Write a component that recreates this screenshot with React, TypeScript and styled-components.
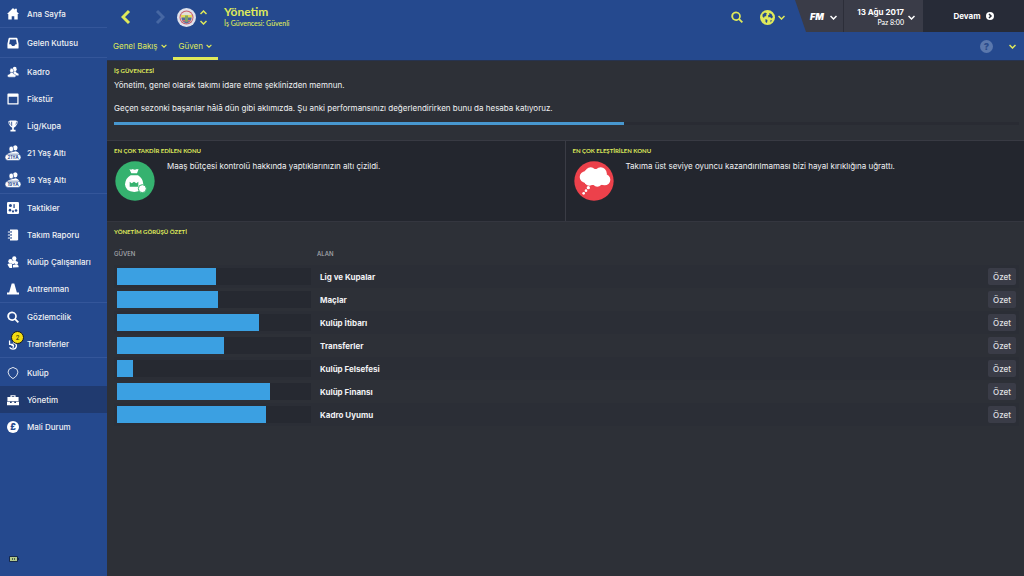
import React from "react";
import styled, { createGlobalStyle } from "styled-components";

const GlobalStyle = createGlobalStyle`
  * { box-sizing: border-box; }
  body {
    margin: 0;
    background: #2d3037;
    color: #f1f2f4;
    font-family: Inter, "Noto Sans", sans-serif;
    font-size: 8px;
    line-height: 12px;
    font-weight: 500;
  }
  button { font: inherit; color: inherit; background: none; border: 0; padding: 0; cursor: pointer; }
  h1, h2, p { margin: 0; }
  p { font-weight: 400; }
  a { color: inherit; text-decoration: none; }
  svg { display: block; flex: none; }
`;

const lime = "#dfe95a";
const narrow = `Lato, "Noto Sans", sans-serif`;

const Shell = styled.div`
  display: grid;
  grid-template-columns: 107px minmax(0, 1fr);
  min-height: 100vh;
`;

/* ---------- sidebar ---------- */

const Sidebar = styled.nav`
  display: flex;
  flex-direction: column;
  background: #25498e;
`;

const NavGroup = styled.div<{ $spaced?: boolean }>`
  padding: ${(p) => (p.$spaced ? "1px 0" : "0")};
  & + & { border-top: 1px solid #34569a; }
`;

const NavLink = styled.a<{ $active?: boolean }>`
  display: flex;
  align-items: center;
  gap: 6px;
  height: 27px;
  padding-left: 5px;
  white-space: nowrap;
  background: ${(p) => (p.$active ? "#203a6f" : "transparent")};
`;

const NavIcon = styled.span`
  position: relative;
  display: grid;
  place-items: center;
  width: 16px;
  height: 16px;
  color: #fff;
`;

const Badge = styled.span`
  position: absolute;
  top: -5px;
  right: -3px;
  width: 13px;
  height: 13px;
  border: 1px solid #14181f;
  border-radius: 50%;
  background: #f2dc12;
  color: #2b2c12;
  font-size: 6px;
  line-height: 11px;
  text-align: center;
`;

const Battery = styled.div`
  margin-top: auto;
  padding: 0 0 14px 9px;
`;

/* ---------- header ---------- */

const Header = styled.header`
  display: flex;
  flex-direction: column;
  height: 60px;
  background: #25498e;
  color: ${lime};
`;

const TopBar = styled.div`
  display: flex;
  height: 32px;
`;

const History = styled.div`
  display: flex;
  align-items: center;
  gap: 24px;
  padding: 2px 0 0 14px;
`;

const Club = styled.div`
  display: flex;
  align-items: center;
  gap: 4px;
  padding: 2px 0 0 12px;
`;

const Stepper = styled.div`
  display: flex;
  flex-direction: column;
  gap: 5px;
`;

const IconButton = styled.button`
  display: flex;
  align-items: center;
  gap: 3px;
`;

const Titles = styled.div`
  padding: 5px 0 0 17px;
`;

const Title = styled.h1`
  font-size: 12px;
  line-height: 14px;
  font-weight: 700;
  font-family: ${narrow};
`;

const Subtitle = styled.p`
  font-size: 7px;
  line-height: 8px;
  font-weight: 500;
  font-family: ${narrow};
`;

const Tools = styled.div`
  display: flex;
  align-items: center;
  gap: 17px;
  margin-left: auto;
  padding: 2px 10px 0 0;
`;

const Clock = styled.div`
  display: flex;
  height: 32px;
  color: #fff;
  background: #3a3c48;
  clip-path: polygon(0 0, 100% 0, 100% 100%, 11px 100%);
`;

const FmButton = styled.button`
  display: flex;
  align-items: center;
  gap: 6px;
  width: 48px;
  padding: 2px 0 0 15px;
`;

const FmMark = styled.span`
  font-size: 9px;
  font-style: italic;
  font-weight: 900;
`;

const DateButton = styled.button`
  display: flex;
  align-items: center;
  justify-content: flex-end;
  gap: 4px;
  width: 80px;
  padding: 2px 8px 0 0;
  border-left: 1px solid #2c2e39;
  text-align: right;
`;

const DateText = styled.span`
  display: flex;
  flex-direction: column;
  line-height: 11px;
  font-weight: 700;
`;

const TimeText = styled.small`
  font-family: ${narrow};
  font-size: 7px;
  line-height: 9px;
  font-weight: 500;
`;

const ContinueButton = styled.button`
  display: flex;
  align-items: center;
  justify-content: center;
  gap: 5px;
  width: 101px;
  background: #272b37;
  font-weight: 700;
`;

const Tabs = styled.div`
  display: flex;
  align-items: stretch;
  flex: 1;
`;

const Tab = styled.button<{ $active?: boolean }>`
  display: flex;
  align-items: center;
  gap: 3px;
  padding: 3px 6px 0;
  border-bottom: 3px solid ${(p) => (p.$active ? lime : "transparent")};
  font-weight: 400;
`;

const TabTools = styled.div`
  display: flex;
  align-items: center;
  gap: 16px;
  margin-left: auto;
  padding: 1px 8px 0 0;
`;

const Help = styled.button`
  width: 13px;
  height: 13px;
  border-radius: 50%;
  background: #5b78ad;
  color: #2b4c8c;
  font-size: 9px;
  line-height: 13px;
  font-weight: 900;
`;

/* ---------- content ---------- */

const Section = styled.section`
  padding: 6px 5px 0 7px;
`;

const Security = styled(Section)`
  height: 80px;
  border-top: 1px solid #263350;
`;

const Heading = styled.h2`
  color: ${lime};
  font-family: ${narrow};
  font-size: 6px;
  line-height: 8px;
  font-weight: 700;
`;

const Copy = styled.p`
  padding-top: 4px;
  & + & { padding-top: 11px; }
`;

const Meter = styled.div`
  height: 3px;
  margin-top: 8px;
  background: #292b33;
`;

const MeterFill = styled.div`
  height: 100%;
  background: #4797cf;
`;

const Topics = styled.div`
  display: grid;
  grid-template-columns: 1fr 1fr;
  border-top: 1px solid #383a43;
  border-bottom: 1px solid #34363f;
  background: #23262e;
`;

const Topic = styled(Section)`
  min-height: 80px;
  &:first-child { border-right: 1px solid #3a3c45; }
`;

const TopicBody = styled.div`
  display: flex;
  gap: 12px;
  padding: 5px 0 0 1px;
  svg { margin-top: 1px; }
`;

const Table = styled.table`
  width: 100%;
  margin-top: 14px;
  border-collapse: collapse;
  table-layout: fixed;
`;

const Th = styled.th<{ $width?: string }>`
  width: ${(p) => p.$width ?? "auto"};
  padding: 0 0 7px;
  color: #a9abb0;
  font-size: 6px;
  line-height: 8px;
  font-weight: 500;
  text-align: left;
`;

const Row = styled.tr`
  height: 23px;
  &:nth-child(odd) { background: #2b2e36; }
`;

const Cell = styled.td`
  padding: 3px;
  &:first-child { padding-right: 6px; }
`;

const NameCell = styled.th`
  padding: 3px;
  font-weight: 700;
  text-align: left;
`;

const Track = styled.div`
  height: 17px;
  background: #262931;
`;

const Fill = styled.div`
  height: 100%;
  background: #3ba0e2;
`;

const SummaryButton = styled.button`
  display: block;
  width: 28px;
  height: 17px;
  border-radius: 2px;
  background: #3a3c47;
  color: #e0e1e5;
`;

/* ---------- icons ---------- */

const Ico = ({ children, size = 14 }: { children: React.ReactNode; size?: number }) => (
  <svg width={size} height={size} viewBox="0 0 28 28" fill="currentColor" aria-hidden="true">
    {children}
  </svg>
);

const Chevron = ({ up = false, size = 7 }: { up?: boolean; size?: number }) => (
  <svg width={size} height={size === 7 ? 5 : 4} viewBox="0 0 14 10" fill="none" stroke="currentColor" strokeWidth="3" aria-hidden="true">
    <path d={up ? "M1 8l6-6 6 6" : "M1 2l6 6 6-6"} />
  </svg>
);

const BackIcon = () => (
  <svg width="10" height="16" viewBox="0 0 10 16" fill="none" stroke="currentColor" strokeWidth="3" aria-hidden="true">
    <path d="M8 2L2 8l6 6" />
  </svg>
);

const ForwardIcon = () => (
  <svg width="10" height="16" viewBox="0 0 10 16" fill="none" stroke="#4667a3" strokeWidth="3" aria-hidden="true">
    <path d="M2 2l6 6-6 6" />
  </svg>
);

const people = (
  <>
    <ellipse cx="18" cy="7.500" rx="4.500" ry="5.500" />
    <path d="M15 13h6l1 3 5 2v4H15z" />
    <ellipse cx="11" cy="11" rx="4.500" ry="5.500" stroke="#25498e" strokeWidth="1" />
    <path d="M8 15h6l1 3 6 3q1 4-3 5H4q-4-1-3-5l6-3z" stroke="#25498e" strokeWidth="1" />
  </>
);

const youth = (label: string) => (
  <>
    <ellipse cx="18" cy="5" rx="4" ry="4.500" />
    <ellipse cx="11" cy="7" rx="4" ry="5" stroke="#25498e" strokeWidth="1" />
    <path d="M3 18q1-4 7-5l9-2q6 2 6 7z" />
    <rect x="0" y="16" width="28" height="11" rx="5.500" stroke="#25498e" strokeWidth="1" />
    <text x="14" y="24.500" fontSize="8" fontWeight="700" textAnchor="middle" fill="#25498e">{label}</text>
  </>
);

const icons: Record<string, React.ReactNode> = {
  home: <path d="M14 0l4 4V2h5v7l5 5h-3v13h-8v-8h-6v8H3V14H0z" />,
  inbox: <path fillRule="evenodd" d="M6 2h16q2 0 2.500 2L27 16v9q0 2-2 2H3q-2 0-2-2v-9L3.500 4Q4 2 6 2zM7 6L5 17h4l3 4h5l3-4h3L21 6z" />,
  squad: people,
  calendar: <path fillRule="evenodd" d="M3 1h22q2 0 2 2v22q0 2-2 2H3q-2 0-2-2V3q0-2 2-2zm1 8v15h20V9z" />,
  cup: <path fillRule="evenodd" d="M6 1h16v2h3q0 9-5 12l-4 3v5h4v4H8v-4h4v-5l-4-3Q3 12 3 3h3zM5 5q0 4 3 7L7 5zm18 0h-2l-1 7q3-3 3-7zM10 4v9l2 2V4z" />,
  u21: youth("21YA"),
  u19: youth("19YA"),
  tactics: (
    <>
      <rect x="0" y="0" width="28" height="28" rx="3" />
      <g fill="#25498e">
        <circle cx="8" cy="8" r="3.500" /><circle cx="7" cy="19" r="3" /><circle cx="14" cy="22" r="2.500" /><circle cx="21" cy="20" r="3" /><rect x="15" y="5" width="3" height="9" />
      </g>
    </>
  ),
  report: (
    <>
      <path d="M7 1h16q3 0 3 3v20q0 3-3 3H7V1z" />
      <path d="M3 7h6M3 14h6M3 21h6" stroke="#25498e" strokeWidth="5" strokeLinecap="round" />
      <path d="M3 7h6M3 14h6M3 21h6" stroke="#fff" strokeWidth="2.500" strokeLinecap="round" />
    </>
  ),
  staff: (
    <>
      <ellipse cx="17" cy="6" rx="5" ry="5.500" />
      <path d="M12 11l9-1 1 5-8 4-5-2z" />
      <ellipse cx="8" cy="12" rx="5" ry="5" />
      <path d="M1 20q2-3 8-3l3 2v9H6z" />
      <ellipse cx="22" cy="16" rx="4" ry="4" />
      <path d="M14 27v-6l7-2q7 1 6 7z" />
    </>
  ),
  cone: <path d="M11 1h6l6 21h5v5H0v-5h5z" />,
  search: <path fillRule="evenodd" d="M12 1a11 11 0 0 1 9 17l7 7-3 3-7-7A11 11 0 1 1 12 1zm0 4a7 7 0 1 0 0 14 7 7 0 0 0 0-14z" />,
  transfer: (
    <g fill="none" stroke="currentColor" strokeWidth="3">
      <path d="M6 6v9h9M14 11q8 1 8 8-1 7-8 7-5 0-8-4" />
      <path d="M10 16l5 2-1 5" />
    </g>
  ),
  club: <path d="M14 1l9 4q5 7 0 14-3 5-9 8-6-3-9-8Q0 12 5 5z" fill="none" stroke="currentColor" strokeWidth="2" />,
  board: (
    <>
      <path fillRule="evenodd" d="M8 7V3h12v4h7v10H1V7zm3 0h6V5h-6z" />
      <path d="M0 18h7v3h4v-3h6v3h4v-3h7v8H0z" />
    </>
  ),
  finance: (
    <>
      <circle cx="14" cy="14" r="14" />
      <text x="14" y="21" fontSize="20" fontWeight="900" textAnchor="middle" fill="#25498e">£</text>
    </>
  ),
};

const Crest = () => (
  <svg width="19" height="19" viewBox="0 0 38 38" role="img" aria-label="Kulüp arması">
    <circle cx="19" cy="19" r="19" fill="#dfe2ec" />
    <circle cx="19" cy="19" r="14" fill="#c9606e" />
    <circle cx="19" cy="19" r="12" fill="#e3dfd6" />
    <path d="M9 14h20v8q-2 7-10 9Q11 29 9 22z" fill="#5468a0" />
    <path d="M8 14h22v5H8z" fill="#e6d85a" />
    <path d="M11 24h16v3H11z" fill="#d6706c" />
    <path d="M16 15h6v11l-3 3-3-3z" fill="#7fa560" />
  </svg>
);

const Globe = () => (
  <svg width="15" height="15" viewBox="0 0 30 30" aria-hidden="true">
    <circle cx="15" cy="15" r="15" fill={lime} />
    <path d="M5 9l5-4 4 2-2 3 1 2-4 1-1 3-3-3zM18 6l5 2 3 6-3 3-3-3-3 1-1-4 3-2zM11 18l4 2-1 6-3-2zM21 20l3 1-3 4z" fill="#25498e" />
  </svg>
);

const MoneyBag = () => (
  <svg width="40" height="40" viewBox="0 0 120 120" aria-hidden="true">
    <circle cx="60" cy="60" r="59" fill="#35b26f" />
    <path d="M43 24q6 3 10 0 6 4 13 0 4 2 5 0l-5 13H49z" fill="#fff" />
    <path d="M47 43h22q15 9 16 27 0 22-27 23-27-1-28-23 1-18 17-27z" fill="#fff" />
    <path d="M44 62l6 5 7-5 7 5 6-5v15H44z" fill="#35b26f" />
    <circle cx="82" cy="83" r="12" fill="#fff" stroke="#35b26f" strokeWidth="3" />
  </svg>
);

const Thought = () => (
  <svg width="40" height="40" viewBox="0 0 120 120" aria-hidden="true">
    <circle cx="60" cy="60" r="59" fill="#ec414b" />
    <g fill="#fff">
      <rect x="28" y="24" width="70" height="48" rx="18" />
      <circle cx="34" cy="48" r="17" /><circle cx="50" cy="36" r="17" /><circle cx="80" cy="37" r="18" />
      <circle cx="92" cy="56" r="17" /><circle cx="70" cy="61" r="16" /><circle cx="46" cy="58" r="16" />
      <circle cx="43" cy="80" r="5" /><circle cx="36" cy="89" r="4" /><circle cx="29" cy="97" r="4" />
    </g>
  </svg>
);

/* ---------- data ---------- */

type Item = { icon: string; label: string; badge?: number; active?: boolean };

const groups: { spaced?: boolean; items: Item[] }[] = [
  { items: [{ icon: "home", label: "Ana Sayfa" }] },
  { spaced: true, items: [{ icon: "inbox", label: "Gelen Kutusu" }] },
  {
    items: [
      { icon: "squad", label: "Kadro" },
      { icon: "calendar", label: "Fikstür" },
      { icon: "cup", label: "Lig/Kupa" },
      { icon: "u21", label: "21 Yaş Altı" },
      { icon: "u19", label: "19 Yaş Altı" },
    ],
  },
  {
    items: [
      { icon: "tactics", label: "Taktikler" },
      { icon: "report", label: "Takım Raporu" },
      { icon: "staff", label: "Kulüp Çalışanları" },
      { icon: "cone", label: "Antrenman" },
    ],
  },
  {
    items: [
      { icon: "search", label: "Gözlemcilik" },
      { icon: "transfer", label: "Transferler", badge: 2 },
    ],
  },
  {
    spaced: true,
    items: [
      { icon: "club", label: "Kulüp" },
      { icon: "board", label: "Yönetim", active: true },
      { icon: "finance", label: "Mali Durum" },
    ],
  },
];

const areas = [
  { name: "Lig ve Kupalar", value: 51 },
  { name: "Maçlar", value: 52 },
  { name: "Kulüp İtibarı", value: 73 },
  { name: "Transferler", value: 55 },
  { name: "Kulüp Felsefesi", value: 8 },
  { name: "Kulüp Finansı", value: 79 },
  { name: "Kadro Uyumu", value: 77 },
];

export default function App() {
  return (
    <>
      <GlobalStyle />
      <Shell lang="tr">
        <Sidebar>
          {groups.map((group) => (
            <NavGroup key={group.items[0].label} $spaced={group.spaced}>
              {group.items.map((item) => (
                <NavLink key={item.label} href="#" $active={item.active} aria-current={item.active ? "page" : undefined}>
                  <NavIcon>
                    <Ico size={item.icon === "u21" || item.icon === "u19" ? 16 : 12}>{icons[item.icon]}</Ico>
                    {item.badge && <Badge>{item.badge}</Badge>}
                  </NavIcon>
                  {item.label}
                </NavLink>
              ))}
            </NavGroup>
          ))}
          <Battery>
            <svg width="10" height="6" viewBox="0 0 10 6" aria-hidden="true">
              <rect width="9" height="6" rx="1" fill="#17294a" />
              <rect x="9" y="2" width="1" height="2" fill="#17294a" />
              <rect x="1" y="1" width="7" height="4" fill="#b4c98c" />
              <path d="M3 2h1v2H3zM5 2h1v2H5z" fill="#4a6350" />
            </svg>
          </Battery>
        </Sidebar>

        <div>
          <Header>
            <TopBar>
              <History>
                <IconButton aria-label="Geri"><BackIcon /></IconButton>
                <IconButton aria-label="İleri" disabled><ForwardIcon /></IconButton>
              </History>
              <Club>
                <Crest />
                <Stepper>
                  <IconButton aria-label="Önceki"><Chevron up /></IconButton>
                  <IconButton aria-label="Sonraki"><Chevron /></IconButton>
                </Stepper>
              </Club>
              <Titles>
                <Title>Yönetim</Title>
                <Subtitle>İş Güvencesi: Güvenli</Subtitle>
              </Titles>
              <Tools>
                <IconButton aria-label="Ara"><Ico size={12}>{icons.search}</Ico></IconButton>
                <IconButton aria-label="Dünya"><Globe /><Chevron /></IconButton>
              </Tools>
              <Clock>
                <FmButton>
                  <FmMark>FM</FmMark>
                  <Chevron />
                </FmButton>
                <DateButton>
                  <DateText>13 Ağu 2017<TimeText>Paz 8:00</TimeText></DateText>
                  <Chevron />
                </DateButton>
                <ContinueButton>
                  Devam
                  <svg width="8" height="8" viewBox="0 0 16 16" aria-hidden="true">
                    <circle cx="8" cy="8" r="8" fill="#fff" />
                    <path d="M6 4l4 4-4 4" fill="none" stroke="#272b37" strokeWidth="3" />
                  </svg>
                </ContinueButton>
              </Clock>
            </TopBar>
            <Tabs>
              <Tab>Genel Bakış <Chevron size={6} /></Tab>
              <Tab $active>Güven <Chevron size={6} /></Tab>
              <TabTools>
                <Help aria-label="Yardım">?</Help>
                <IconButton aria-label="Daha fazla"><Chevron /></IconButton>
              </TabTools>
            </Tabs>
          </Header>

          <main>
            <Security>
              <Heading>İŞ GÜVENCESİ</Heading>
              <Copy>Yönetim, genel olarak takımı idare etme şeklinizden memnun.</Copy>
              <Copy>Geçen sezonki başarılar hâlâ dün gibi aklımızda. Şu anki performansınızı değerlendirirken bunu da hesaba katıyoruz.</Copy>
              <Meter><MeterFill style={{ width: "56.4%" }} /></Meter>
            </Security>
            <Topics>
              <Topic>
                <Heading>EN ÇOK TAKDİR EDİLEN KONU</Heading>
                <TopicBody><MoneyBag /><p>Maaş bütçesi kontrolü hakkında yaptıklarınızın altı çizildi.</p></TopicBody>
              </Topic>
              <Topic>
                <Heading>EN ÇOK ELEŞTİRİLEN KONU</Heading>
                <TopicBody><Thought /><p>Takıma üst seviye oyuncu kazandırılmaması bizi hayal kırıklığına uğrattı.</p></TopicBody>
              </Topic>
            </Topics>
            <Section>
              <Heading>YÖNETİM GÖRÜŞÜ ÖZETİ</Heading>
              <Table>
                <thead>
                  <tr><Th $width="203px">GÜVEN</Th><Th>ALAN</Th><Th $width="34px" aria-label="İşlem" /></tr>
                </thead>
                <tbody>
                  {areas.map((area) => (
                    <Row key={area.name}>
                      <Cell><Track><Fill style={{ width: `${area.value}%` }} /></Track></Cell>
                      <NameCell scope="row">{area.name}</NameCell>
                      <Cell><SummaryButton>Özet</SummaryButton></Cell>
                    </Row>
                  ))}
                </tbody>
              </Table>
            </Section>
          </main>
        </div>
      </Shell>
    </>
  );
}
